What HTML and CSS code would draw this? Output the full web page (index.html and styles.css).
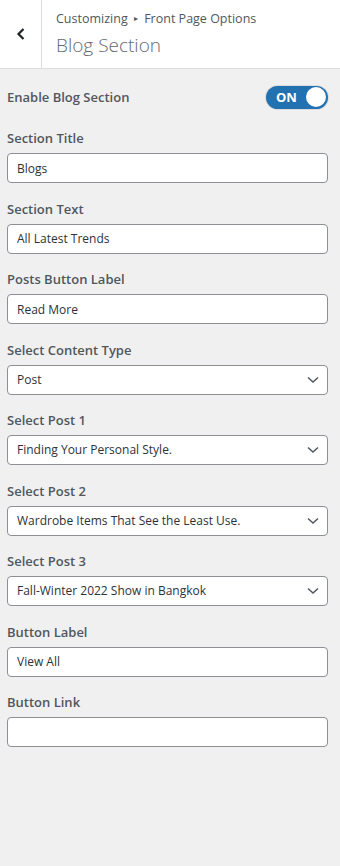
FILE: index.html
```html
<!DOCTYPE html>
<html lang="en">
<head>
  <meta charset="UTF-8" />
  <meta name="viewport" content="width=device-width, initial-scale=1.0"/>
  <title>Blog Section</title>
  <link rel="stylesheet" href="styles.css">
</head>
<body>

<header class="panel-head">
  <button class="back" aria-label="Back">
    <svg width="10" height="14" viewBox="0 0 10 14"><path d="M7.5 2 L2.5 7 L7.5 12" fill="none" stroke="#1d2327" stroke-width="2.2"/></svg>
  </button>
  <div class="head-title">
    <div class="crumb">Customizing <span class="arrow">▸</span> Front Page Options</div>
    <h1>Blog Section</h1>
  </div>
</header>

<main class="controls">
  <div class="control toggle-row">
    <span class="label">Enable Blog Section</span>
    <span class="toggle"><span class="on">ON</span><span class="knob"></span></span>
  </div>

  <div class="control">
    <label class="label">Section Title</label>
    <input type="text" class="field" value="Blogs">
  </div>

  <div class="control">
    <label class="label">Section Text</label>
    <input type="text" class="field" value="All Latest Trends">
  </div>

  <div class="control">
    <label class="label">Posts Button Label</label>
    <input type="text" class="field" value="Read More">
  </div>

  <div class="control">
    <label class="label">Select Content Type</label>
    <div class="select">Post</div>
  </div>

  <div class="control">
    <label class="label">Select Post 1</label>
    <div class="select">Finding Your Personal Style.</div>
  </div>

  <div class="control">
    <label class="label">Select Post 2</label>
    <div class="select">Wardrobe Items That See the Least Use.</div>
  </div>

  <div class="control">
    <label class="label">Select Post 3</label>
    <div class="select">Fall-Winter 2022 Show in Bangkok</div>
  </div>

  <div class="control">
    <label class="label">Button Label</label>
    <input type="text" class="field" value="View All">
  </div>

  <div class="control">
    <label class="label">Button Link</label>
    <input type="text" class="field" value="">
  </div>
</main>

</body>
</html>
```

FILE: styles.css
```css
body {
  font-family: "Open Sans", "Noto Sans", sans-serif;
  margin: 0; padding: 0;
  background: #f0f0f1;
  color: #50575e;
  height: 866px;
}
.panel-head {
  display: flex;
  height: 68px;
  background: #fff;
  border-bottom: 1px solid #dcdcde;
}
.back {
  width: 42px;
  border: none;
  border-right: 1px solid #dcdcde;
  background: #fff;
  padding: 0;
  display: flex;
  align-items: center;
  justify-content: center;
}
.head-title {
  padding: 9px 0 0 14px;
}
.crumb {
  font-size: 12.5px;
  line-height: 18px;
  color: #50575e;
}
.crumb .arrow {
  font-size: 8px;
  vertical-align: 2px;
  margin: 0 3px;
}
.panel-head h1 {
  margin: 5px 0 0;
  font-size: 19px;
  font-weight: 300;
  line-height: 24px;
  color: #646970;
}
.controls {
  padding: 15px 12px 10px 7px;
}
.control {
  margin-bottom: 15.5px;
}
.label {
  display: block;
  font-size: 13px;
  font-weight: 600;
  line-height: 20px;
  margin-bottom: 5px;
}
.toggle-row {
  display: flex;
  align-items: center;
  justify-content: space-between;
  height: 26px;
  margin-bottom: 18px;
}
.toggle-row .label {
  margin: 0;
}
.toggle {
  width: 62px;
  height: 23px;
  border-radius: 12px;
  background: #2271b1;
  display: flex;
  align-items: center;
  justify-content: space-between;
  box-sizing: border-box;
  padding: 0 2px 0 10px;
  box-shadow: 0 0 0 1px #dcdcde;
}
.toggle .on {
  color: #fff;
  font-weight: 700;
  font-size: 13px;
}
.toggle .knob {
  width: 20px;
  height: 20px;
  border-radius: 50%;
  background: #fff;
}
.field, .select {
  display: block;
  width: 100%;
  height: 30px;
  box-sizing: border-box;
  border: 1px solid #8c8f94;
  border-radius: 4px;
  background: #fff;
  padding: 0 9px;
  font-family: inherit;
  font-size: 12px;
  color: #2c3338;
  line-height: 28px;
}
.select {
  background: #fff url("data:image/svg+xml;utf8,<svg xmlns='http://www.w3.org/2000/svg' width='12' height='8' viewBox='0 0 12 8'><path d='M1 1.5 L6 6 L11 1.5' fill='none' stroke='%2350575e' stroke-width='1.5'/></svg>") no-repeat right 8px center;
}
```
